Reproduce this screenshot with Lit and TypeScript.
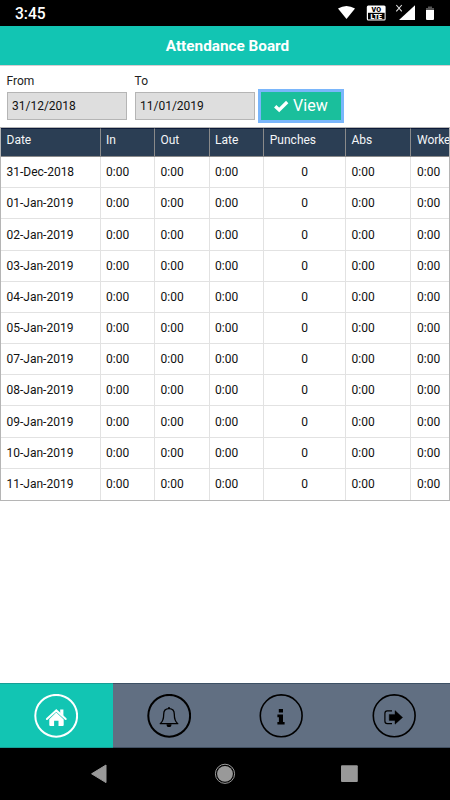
import { LitElement, html, css, svg } from "lit";
import { customElement } from "lit/decorators.js";
import { classMap } from "lit/directives/class-map.js";

const DATES = [
  "31-Dec-2018", "01-Jan-2019", "02-Jan-2019", "03-Jan-2019", "04-Jan-2019", "05-Jan-2019",
  "07-Jan-2019", "08-Jan-2019", "09-Jan-2019", "10-Jan-2019", "11-Jan-2019",
];
const HEADS = ["Date", "In", "Out", "Late", "Punches", "Abs", "Worke"];

const home = svg`
  <path d="M12.9 25 L22.3 16.4 L31.7 25" fill="none" stroke="currentColor" stroke-width="2" stroke-linecap="round"/>
  <path d="M26.2 15.4 H29.4 V22 L26.2 19 Z M22.3 18.6 L29.7 25.4 V30.9 Q29.7 31.9 28.7 31.9 H24.5 V26.8 H20.1 V31.9 H16.3 Q15.3 31.9 15.3 30.9 V25.2 Z" fill="currentColor"/>`;
const bell = svg`
  <path d="M22 14.6 C18.5 14.6 16.7 17 16.7 20.3 C16.7 25.2 15.6 27.9 13.2 29.7 H30.8 C28.4 27.9 27.3 25.2 27.3 20.3 C27.3 17 25.5 14.6 22 14.6 Z" fill="none" stroke="currentColor" stroke-width="1.3" stroke-linejoin="round"/>
  <path d="M21 14.7 V13.9 A1 1 0 0 1 23 13.9 V14.7 Z M19.5 30.2 A2.5 2.9 0 0 0 24.5 30.2 Z" fill="currentColor"/>`;
const info = svg`
  <path d="M19.8 15 H24 V18.4 H19.8 Z M18.4 20.6 H24 V27.9 H25.6 V30.5 H18.4 V27.9 H19.9 V23.3 H18.4 Z" fill="currentColor"/>`;
const exit = svg`
  <path d="M20 16.8 H15.3 Q12.9 16.8 12.9 19.5 V27 Q12.9 29.7 15.3 29.7 H20" fill="none" stroke="currentColor" stroke-width="1.2"/>
  <path d="M17.2 20.4 H23 V16.6 L30.6 23.4 L23 30.2 V26.4 H17.2 Z" fill="currentColor" stroke="currentColor" stroke-width=".4" stroke-linejoin="round"/>`;
const TABS = [home, bell, info, exit];

@customElement("app-root")
export class AppRoot extends LitElement {
  static styles = css`
    :host {
      display: flex; flex-direction: column; width: 450px; height: 800px; overflow: hidden;
      background: #fff; color: #111; font: 12px/16px Roboto, sans-serif; box-sizing: border-box;
    }
    * { box-sizing: border-box; }
    svg { display: block; }
    .status { height: 26px; flex: none; background: #000; color: #fff; display: flex; justify-content: space-between; }
    .clock { font-size: 15.6px; line-height: 29px; font-weight: 500; padding-left: 15px; }
    .title {
      height: 40px; flex: none; background: #12c5b3; border-bottom: 1px solid #d8cdd1; color: #fff;
      text-align: center; font-size: 15.3px; line-height: 40px; font-weight: 700; padding-left: 5px;
    }
    .filters { display: flex; height: 61px; flex: none; padding: 7px 0 0 6.6px; }
    .field { width: 120px; margin-right: 8px; }
    .label { display: block; height: 19px; line-height: 16px; color: #222; }
    .input {
      height: 28px; border: 1px solid #b5b5b5; background: #dedede; padding: 0 4.4px; line-height: 26px;
    }
    .view {
      width: 80px; height: 28px; margin: 19px 0 0 -2px; background: #1abf9c; color: #fff; display: flex;
      align-items: center; padding-left: 13px; gap: 4.5px; font-size: 16px; box-shadow: 0 0 0 3px #7ab6fb;
    }
    .table {
      width: 450px; height: 374px; flex: none; border: 1px solid #b5b5b5; display: grid;
      grid-template-rows: 29px repeat(11, 1fr); overflow: hidden;
    }
    .row { display: grid; grid-template-columns: 99.5px 54.5px 54.5px 54.8px 81.7px 65.5px 38.5px; overflow: hidden; min-height: 0; }
    .cell { border-right: 1px solid #e2e2e2; border-bottom: 1px solid #e2e2e2; padding: 7.2px 0 0 5.5px; white-space: nowrap; overflow: hidden; }
    .cell:last-child { border-right: 0; }
    .row:last-child .cell { border-bottom: 0; }
    .num { text-align: center; padding-left: 0; }
    .head .cell { background: #2b3e54; color: #f4f6f8; border-color: #8a8a8a; border-top: 1px solid #0b1938; padding-top: 3px; }
    .head .cell:last-child { letter-spacing: -0.05px; }
    .space { flex: 1; }
    .tabs { height: 65px; flex: none; display: grid; grid-template-columns: repeat(4, 1fr); }
    .tab { background: #616f82; color: #000; border-top: 1px solid #3d5165; border-bottom: 1px solid #414f61; display: flex; justify-content: center; align-items: center; }
    .tab.active { background: #12c5b3; color: #fff; border-color: #169f96; }
    .nav { height: 52px; flex: none; background: #000; }
  `;

  render() {
    return html`
      <div class="status">
        <span class="clock">3:45</span>
        <svg width="120" height="26" viewBox="0 0 120 26">
          <path d="M8 8.6 Q16.5 3.2 25 8.6 L16.5 19 Z" fill="#fff"/>
          <rect x="36.8" y="5.5" width="18.8" height="15" rx="1.5" fill="#fff"/>
          <rect x="38" y="12.8" width="16.6" height="6.6" fill="#000"/>
          <text x="46.3" y="11.9" font-size="7" font-weight="900" text-anchor="middle" fill="#000">VO</text>
          <text x="46.3" y="18.9" font-size="7" font-weight="900" text-anchor="middle" fill="#fff">LTE</text>
          <path d="M66.3 5 L71.8 11.3 M71.8 5 L66.3 11.3" stroke="#ddd" stroke-width="1.1"/>
          <path d="M85 5.3 V20 H69 Z" fill="#fff"/>
          <path d="M98 6.6 H102 V8 H104 V10 H96 V8 H98 Z" fill="#555"/>
          <path d="M96 10 H104 V19 Q104 20 103 20 H97 Q96 20 96 19 Z" fill="#fff"/>
        </svg>
      </div>
      <div class="title">Attendance Board</div>
      <div class="filters">
        <div class="field"><span class="label">From</span><div class="input">31/12/2018</div></div>
        <div class="field"><span class="label">To</span><div class="input">11/01/2019</div></div>
        <div class="view">
          <svg width="15" height="13" viewBox="0 0 15 13"><path d="M1.2 6.2 L5.2 10 L13.2 2" fill="none" stroke="#fff" stroke-width="3.3"/></svg>
          <span>View</span>
        </div>
      </div>
      <div class="table">
        <div class="row head">${HEADS.map((h) => html`<div class="cell">${h}</div>`)}</div>
        ${DATES.map((d) => html`<div class="row">
          ${[d, "0:00", "0:00", "0:00", "0", "0:00", "0:00"].map(
            (v) => html`<div class=${classMap({ cell: true, num: v === "0" })}>${v}</div>`)}
        </div>`)}
      </div>
      <div class="space"></div>
      <div class="tabs">
        ${TABS.map((icon, i) => html`<div class=${classMap({ tab: true, active: i === 0 })}>
          <svg width="44" height="44" viewBox="0 0 44 44">
            <circle cx="22.2" cy="21.8" r="20.9" fill="none" stroke="currentColor" stroke-width=${i < 2 ? 2 : 1.6}/>
            ${icon}
          </svg>
        </div>`)}
      </div>
      <div class="nav">
        <svg width="450" height="52" viewBox="0 0 450 52">
          <path d="M106 17 V34.6 L91.6 25.8 Z" fill="#999" stroke="#999" stroke-linejoin="round"/>
          <circle cx="225" cy="25.8" r="9.6" fill="none" stroke="#999" stroke-width="1"/>
          <circle cx="225" cy="25.8" r="7.9" fill="#999"/>
          <rect x="341" y="17.3" width="16.8" height="16.8" rx="1" fill="#999"/>
        </svg>
      </div>
    `;
  }
}
